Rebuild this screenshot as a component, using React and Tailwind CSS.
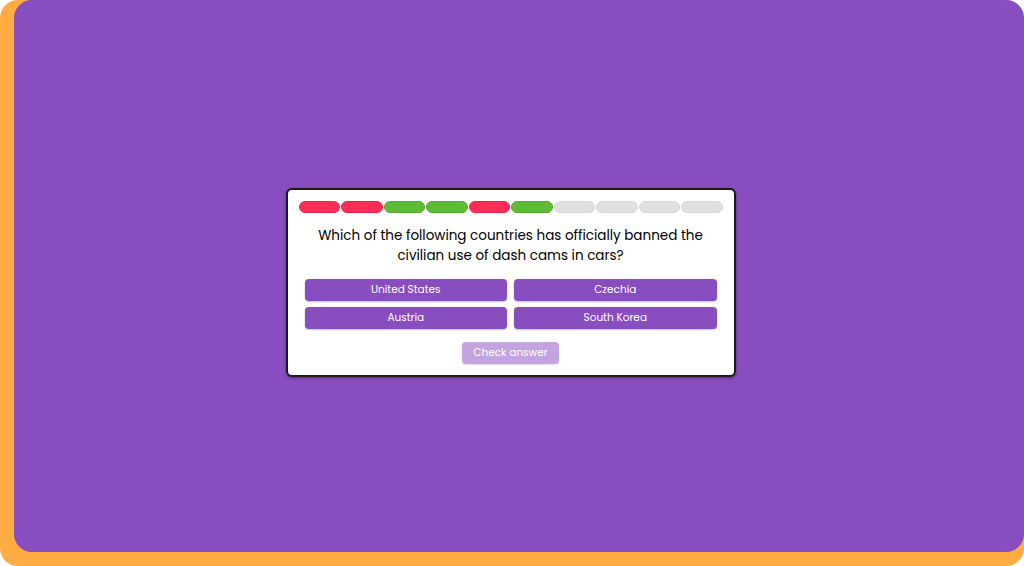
import React from "react";

const bars = ["r", "r", "g", "g", "r", "g", "x", "x", "x", "x"];
const barCls = {
  r: "bg-[#FF2D55] border-[#E8264B]",
  g: "bg-[#5FBA37] border-[#52A82E]",
  x: "bg-[#E0E0E0] border-[#D8D8D8]",
};

export default function App() {
  const font = { fontFamily: "Poppins, Inter, 'Noto Sans', sans-serif" };
  return (
    <div className="w-full h-[566px] bg-white" style={font}>
      <div className="w-full h-full rounded-[18px] bg-[#FFAD42] pl-[14px] pb-[14px]">
        <div className="w-full h-full rounded-[18px] bg-[#884DBF] flex items-center justify-center">
          <div className="w-[450px] bg-white border-2 border-[#1a1a1a] rounded-[6px] shadow-[0_1px_3px_rgba(0,0,0,0.4)] px-[11px] pt-[11px] pb-[11px] mt-[12px] mr-[17px]">
            <div className="flex gap-[1px]">
              {bars.map((b, i) => (
                <div key={i} className={"flex-1 h-[12px] rounded-full border " + barCls[b]} />
              ))}
            </div>
            <div className="mt-[13px] text-center text-[13.5px] leading-[20px] text-black">
              Which of the following countries has officially banned the
              <br />
              civilian use of dash cams in cars?
            </div>
            <div className="mt-[13px] px-[6px] grid grid-cols-2 gap-x-[7px] gap-y-[6px]">
              {["United States", "Czechia", "Austria", "South Korea"].map((t) => (
                <div
                  key={t}
                  className="h-[22px] rounded-[4px] bg-[#884DBF] text-white text-[10.5px] flex items-center justify-center shadow-[0_1px_2px_rgba(0,0,0,0.25)]"
                >
                  {t}
                </div>
              ))}
            </div>
            <div className="mt-[13px] flex justify-center">
              <div className="h-[22px] px-[11px] rounded-[4px] bg-[#C4A4E0] text-white text-[10.5px] flex items-center shadow-[0_1px_2px_rgba(0,0,0,0.15)]">
                Check answer
              </div>
            </div>
          </div>
        </div>
      </div>
    </div>
  );
}
